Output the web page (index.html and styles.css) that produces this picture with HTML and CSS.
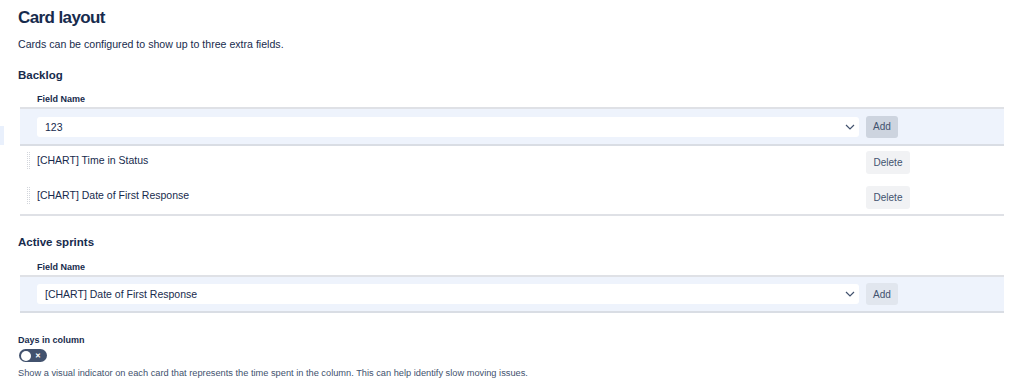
FILE: index.html
```html
<!DOCTYPE html>
<html>

<head>
    <meta charset="utf-8" />
    <title>Card layout</title>
    <link rel="stylesheet" href="styles.css">
</head>

<body>
    <div class="edge"></div>
    <div class="page">
        <h1 class="title">Card layout</h1>
        <p class="desc">Cards can be configured to show up to three extra fields.</p>

        <!-- backlog -->
        <h2 class="section">Backlog</h2>
        <div class="fields">
            <div class="head">Field Name</div>
            <div class="row addRow">
                <span></span>
                <div class="select">123<svg class="chev" width="10" height="6" viewBox="0 0 10 6"><path d="M1 1l4 4 4-4" fill="none" stroke="#42526e" stroke-width="1.2"/></svg></div>
                <div><button class="btn add pressed">Add</button></div>
            </div>
            <div class="row item">
                <span class="grip"></span>
                <div class="name">[CHART] Time in Status</div>
                <div><button class="btn del">Delete</button></div>
            </div>
            <div class="row item last">
                <span class="grip"></span>
                <div class="name">[CHART] Date of First Response</div>
                <div><button class="btn del">Delete</button></div>
            </div>
        </div>

        <!-- active sprints -->
        <h2 class="section second">Active sprints</h2>
        <div class="fields">
            <div class="head">Field Name</div>
            <div class="row addRow single">
                <span></span>
                <div class="select">[CHART] Date of First Response<svg class="chev" width="10" height="6" viewBox="0 0 10 6"><path d="M1 1l4 4 4-4" fill="none" stroke="#42526e" stroke-width="1.2"/></svg></div>
                <div><button class="btn add">Add</button></div>
            </div>
        </div>

        <div class="days">
            <div class="daysLabel">Days in column</div>
            <div class="toggle"><span class="knob"></span><span class="cross">&#10005;</span></div>
            <p class="help">Show a visual indicator on each card that represents the time spent in the column. This can help identify slow moving issues.</p>
        </div>
    </div>
</body>

</html>
```

FILE: styles.css
```css
body {
    margin: 0;
    background: #fff;
    color: #172b4d;
    font-family: "Liberation Sans", Arial, sans-serif;
}

.edge {
    position: absolute;
    left: 0;
    top: 126px;
    width: 4px;
    height: 19px;
    background: #e9f0fc;
}

.page {
    padding: 7px 0 0 18px;
}

.title {
    margin: 0;
    font-size: 17px;
    line-height: 22px;
    font-weight: 600;
    letter-spacing: -0.6px;
}

.desc {
    margin: 8px 0 0;
    font-size: 10.6px;
    line-height: 14px;
    color: #172b4d;
}

.section {
    margin: 16px 0 0;
    font-size: 11.5px;
    line-height: 16px;
    font-weight: 700;
}

.section.second {
    margin-top: 18px;
}

.fields {
    margin-left: 2px;
    width: 984px;
}

.head {
    padding: 11px 0 0 17px;
    height: 13px;
    font-size: 9px;
    line-height: 11px;
    font-weight: 700;
    border-bottom: 2px solid #dfe1e6;
}

.second + .fields .head {
    padding-top: 12px;
}

.row {
    display: grid;
    grid-template-columns: 17px 829px 138px;
    font-size: 10.5px;
}

.addRow {
    height: 35px;
    align-items: center;
    background: #eef3fc;
    border-bottom: 2px solid #d9dde4;
}

.addRow.single {
    height: 34px;
}

.select {
    position: relative;
    width: 814px;
    height: 20px;
    padding-left: 8px;
    line-height: 20px;
    background: #fff;
    border-radius: 3px;
    color: #172b4d;
}

.chev {
    position: absolute;
    right: 4px;
    top: 7px;
}

.item {
    height: 35px;
    align-items: start;
    padding-top: 5px;
    box-sizing: border-box;
}

.item.last {
    border-bottom: 2px solid #dfe1e6;
    height: 35px;
}

.grip {
    margin-left: 6px;
    width: 4px;
    height: 18px;
    background-color: #d3d6dc;
    background-image: linear-gradient(#fff 1px, transparent 1px), linear-gradient(90deg, #fff 1px, transparent 1px);
    background-size: 2px 2px;
}

.name {
    padding-top: 3px;
    line-height: 13px;
}

.btn {
    display: block;
    border: 0;
    border-radius: 3px;
    font-family: "Liberation Sans", Arial, sans-serif;
    font-size: 10px;
    color: #42526e;
    padding: 0;
}

.add {
    width: 32px;
    height: 22px;
    background: #e1e6ee;
}

.add.pressed {
    background: #cdd4df;
}

.del {
    width: 44px;
    height: 23px;
    background: #f1f2f4;
}

.days {
    padding-top: 22px;
}

.daysLabel {
    font-size: 9px;
    line-height: 11px;
    font-weight: 700;
}

.toggle {
    margin: 3px 0 0 1px;
    position: relative;
    width: 28px;
    height: 13px;
    border-radius: 7px;
    background: #42526e;
}

.knob {
    position: absolute;
    left: 2px;
    top: 1.5px;
    width: 10px;
    height: 10px;
    border-radius: 50%;
    background: #fff;
}

.cross {
    position: absolute;
    left: 16px;
    top: 0;
    font-size: 7px;
    line-height: 13px;
    color: #fff;
    font-weight: 700;
}

.help {
    margin: 5px 0 0;
    font-size: 9.25px;
    line-height: 12px;
    color: #42526e;
}
```
